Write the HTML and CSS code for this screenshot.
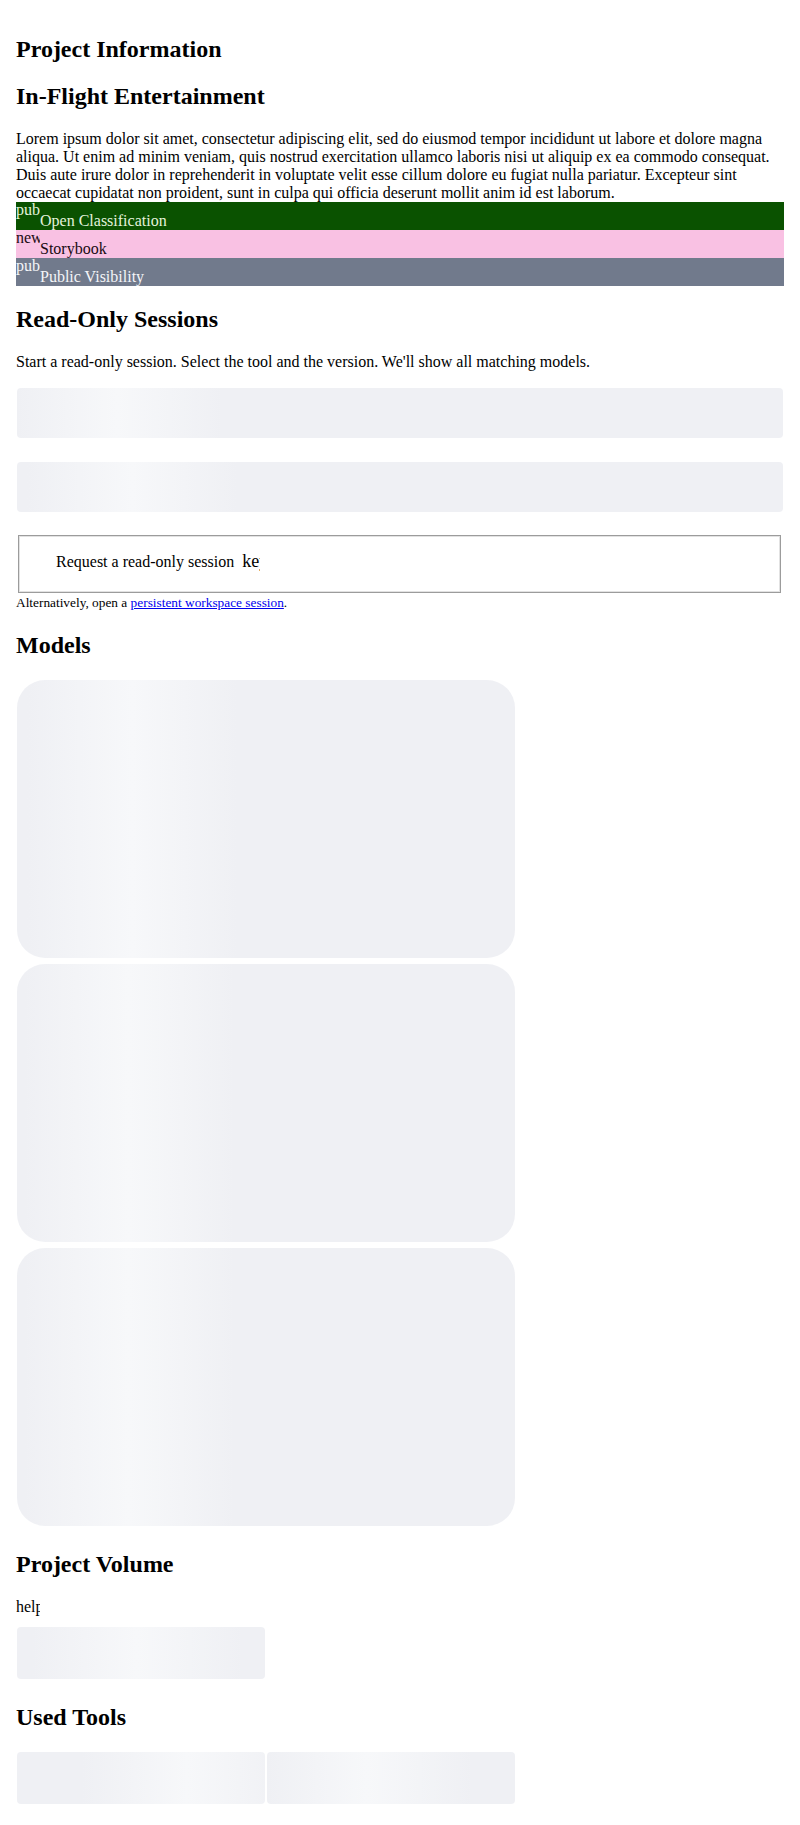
FILE: index.html
```html
<!DOCTYPE html>
<html lang="en">
<head>
<meta charset="utf-8">
<title>Project Information</title>
<link rel="stylesheet" href="styles.css">
</head>
<body>
<div class="page">
  <h2 class="title">Project Information</h2>
  <h2 class="title">In-Flight Entertainment</h2>
  <div class="desc">Lorem ipsum dolor sit amet, consectetur adipiscing elit, sed do eiusmod tempor incididunt ut labore et dolore magna aliqua. Ut enim ad minim veniam, quis nostrud exercitation ullamco laboris nisi ut aliquip ex ea commodo consequat. Duis aute irure dolor in reprehenderit in voluptate velit esse cillum dolore eu fugiat nulla pariatur. Excepteur sint occaecat cupidatat non proident, sunt in culpa qui officia deserunt mollit anim id est laborum.</div>
  <div class="tag tag-green"><span class="tag-ico">public</span>Open Classification</div>
  <div class="tag tag-pink"><span class="tag-ico">new_releases</span>Storybook</div>
  <div class="tag tag-grey"><span class="tag-ico">public</span>Public Visibility</div>

  <h2 class="title">Read-Only Sessions</h2>
  <p class="intro">Start a read-only session. Select the tool and the version. We'll show all matching models.</p>
  <div class="field-wrap"><div class="skel field skel-a"></div></div>
  <div class="field-wrap"><div class="skel field skel-b"></div></div>
  <button class="req" type="button">Request a read-only session<span class="btn-ico">key</span></button>
  <div class="alt">Alternatively, open a <a href="#" class="alt-link">persistent workspace session</a>.</div>

  <h2 class="title">Models</h2>
  <div class="grid">
    <div class="skel card skel-c"></div>
    <div class="skel card skel-d"></div>
    <div class="skel card skel-d"></div>
  </div>

  <h2 class="title">Project Volume</h2>
  <div class="help"><span class="help-ico">help</span></div>
  <div class="grid">
    <div class="skel tile skel-e"></div>
  </div>

  <h2 class="title">Used Tools</h2>
  <div class="grid grid-last">
    <div class="skel tile skel-f"></div>
    <div class="skel tile skel-g"></div>
  </div>
</div>
</body>
</html>
```

FILE: styles.css
```css
html, body {
  margin: 0;
  padding: 0;
  background: #ffffff;
}

body {
  font-family: "Liberation Serif", "Times New Roman", serif;
  font-size: 16px;
  color: #000000;
}

.page {
  padding: 16px;
}

.title {
  font-size: 24px;
  font-weight: bold;
  margin: 19.92px 0;
}

.desc {
  line-height: 18px;
}

.tag {
  line-height: 18px;
  white-space: nowrap;
}

.tag-ico {
  display: inline-block;
  width: 24px;
  height: 24px;
  overflow: hidden;
  line-height: 15px;
  white-space: nowrap;
}

.tag-green {
  background: #0a5200;
  color: #e4f3dc;
}

.tag-pink {
  background: #f9c1e3;
  color: #1a0a12;
}

.tag-grey {
  background: #717a8c;
  color: #f4f5f8;
}

.intro {
  margin: 19.92px 0 16px;
}

.skel {
  --p: 100px;
  --w: 105px;
  background: linear-gradient(90deg, #eff0f4 0, #eff0f4 calc(var(--p) - var(--w)), #f7f8fa var(--p), #eff0f4 calc(var(--p) + var(--w)), #eff0f4 100%);
}

.skel-a { --p: 100px; }
.skel-b { --p: 115px; }
.skel-c { --p: 115px; }
.skel-d { --p: 112px; }
.skel-e { --p: 120px; }
.skel-f { --p: 170px; }
.skel-g { --p: 100px; }

.field-wrap {
  padding: 1px;
  margin-bottom: 22px;
}

.field {
  height: 50px;
  border-radius: 4px;
}

.req {
  display: flex;
  align-items: center;
  box-sizing: border-box;
  width: 763px;
  height: 58px;
  margin: 0 0 0 2px;
  padding: 0 0 4px 37px;
  background: #ffffff;
  border: 1px solid #9c9c9c;
  box-shadow: inset 0 0 0 1px #e2e2e2;
  border-radius: 0;
  font-family: "Liberation Serif", "Times New Roman", serif;
  font-size: 16px;
  color: #000000;
  line-height: normal;
  text-align: left;
}

.btn-ico {
  display: inline-block;
  width: 18px;
  height: 21px;
  margin-left: 8px;
  overflow: hidden;
  font-size: 18px;
  white-space: nowrap;
}

.alt {
  font-size: 13.333px;
  margin-top: 2px;
  padding-bottom: 2px;
}

.alt-link {
  color: #0000ee;
  text-decoration: underline;
}

.grid {
  display: grid;
  grid-template-columns: repeat(3, 250px);
  row-gap: 4px;
  padding-bottom: 4px;
}

.grid-last {
  padding-bottom: 0;
}

.card {
  grid-column: span 2;
  height: 278px;
  margin: 1px;
  border-radius: 28px;
}

.tile {
  height: 52px;
  margin: 1px;
  border-radius: 4px;
}

.help-ico {
  display: inline-block;
  width: 24px;
  height: 24px;
  overflow: hidden;
  white-space: nowrap;
}
```
